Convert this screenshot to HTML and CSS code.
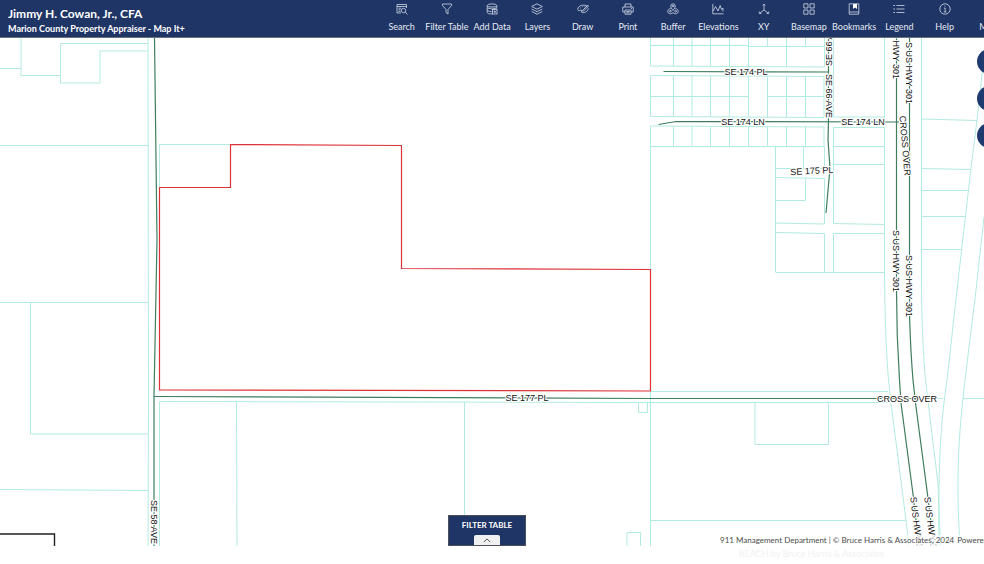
FILE: index.html
```html
<!DOCTYPE html>
<html lang="en">
<head>
<meta charset="utf-8">
<title>Marion County Property Appraiser - Map It+</title>
<link rel="stylesheet" href="styles.css">
</head>
<body>
<header class="header">
  <div class="brand">
    <h1>Jimmy H. Cowan, Jr., CFA</h1>
    <p>Marion County Property Appraiser - Map It+</p>
  </div>
  <nav class="toolbar" aria-label="Map tools">
    <button class="tool"><svg viewBox="0 0 12 12"><path d="M5 10H1V1.500H10.500V5M1 3.500H10.500M2.500 5.200H5M2.500 6.800H4.500M2.500 8.400H4.500"/><circle cx="7.500" cy="7.500" r="2.200"/><path d="M9.100 9.100L11.500 11.500"/></svg><span>Search</span></button>
    <button class="tool"><svg viewBox="0 0 12 12"><path d="M1.500 1H10.500V2.500L7 6.500V11L5 9.500V6.500L1.500 2.500Z"/></svg><span>Filter Table</span></button>
    <button class="tool"><svg viewBox="0 0 12 12"><ellipse cx="6" cy="2.500" rx="4.800" ry="1.600"/><path d="M1.200 2.500V9.500Q1.200 11 6 11M10.800 2.500V5.500M1.200 5Q6 7 10.800 5M1.200 7.500Q3 8.600 5.500 8.600"/><rect x="6.500" y="6.500" width="4.500" height="4.500"/><path d="M7.500 8.800H10M8.750 7.500V10"/></svg><span>Add Data</span></button>
    <button class="tool"><svg viewBox="0 0 12 12"><path d="M6 .8L11.300 3.500L6 6.200L.7 3.500ZM.7 6L6 8.700L11.300 6M.7 8.500L6 11.200L11.300 8.500"/></svg><span>Layers</span></button>
    <button class="tool"><svg viewBox="0 0 12 12"><path d="M10.500 3.200C7.500 1 .8 2.300 .8 6.200C.8 8 2.500 8 3.500 7.200C4.600 6.500 5 8 4.500 9.200C6.500 10.500 11.300 8.800 11.200 5.300M5.200 7.700L10.800 2.300L11.600 3.200L6.200 8.300Z"/><path d="M3 5H3.600M5 3.800H5.600M7.400 3.600H8"/></svg><span>Draw</span></button>
    <button class="tool"><svg viewBox="0 0 12 12"><path d="M3 4V1H9V4M3 9H.8V4H11.200V9H9M3 7H9V11.200H3ZM9 5.500H10M4.300 8.500H7.700M4.300 9.800H7.700"/></svg><span>Print</span></button>
    <button class="tool"><svg viewBox="0 0 12 12"><path d="M6 7.500C4.500 5.500 3.800 4.500 3.800 3A2.200 2.200 0 0 1 8.200 3C8.200 4.500 7.500 5.500 6 7.500Z"/><circle cx="6" cy="3" r=".8"/><path d="M3.500 5.500C-.5 6.500 .2 10.800 3.500 10.800Q4.800 10.800 6 9.700Q7.200 10.800 8.500 10.800C11.800 10.800 12.500 6.500 8.500 5.500"/><circle cx="3.400" cy="8.200" r=".9"/><circle cx="8.600" cy="8.200" r=".9"/></svg><span>Buffer</span></button>
    <button class="tool"><svg viewBox="0 0 12 12"><path d="M.8 1V10.800H11.500M1 8L3.500 3.500L6 8L8.200 2.500L9.500 6.500L11 5V8.500"/></svg><span>Elevations</span></button>
    <button class="tool"><svg viewBox="0 0 12 12"><path d="M6 2V7L2 10M6 7L10 10M4.800 2.500L6 1L7.200 2.500M1.300 8.500V10.500H3.300M10.700 8.500V10.500H8.700"/></svg><span>XY</span></button>
    <button class="tool"><svg viewBox="0 0 12 12"><path d="M.8 .8H5V5H.8ZM7 .8H11.200V5H7ZM.8 7H5V11.200H.8ZM7 7H11.200V11.200H7Z"/></svg><span>Basemap</span></button>
    <button class="tool"><svg viewBox="0 0 12 12"><path d="M1.200 .8H10.800V11.200H1.200ZM1.200 9H10.800"/><path class="solid" d="M5 1H9V6L7 4.500L5 6Z"/></svg><span>Bookmarks</span></button>
    <button class="tool"><svg viewBox="0 0 12 12"><path d="M3.500 2.500H11.500M3.500 6H11.500M3.500 9.500H11.500"/><path class="solid" d="M.6 2H1.700V3H.6ZM.6 5.500H1.700V6.500H.6ZM.6 9H1.700V10H.6Z"/></svg><span>Legend</span></button>
    <button class="tool"><svg viewBox="0 0 12 12"><circle cx="6" cy="6" r="5.200"/><path d="M5 5.200H6.200V9M4.800 9H7.400M5.500 3.200H6.500"/></svg><span>Help</span></button>
    <button class="tool"><svg viewBox="0 0 12 12"><path d="M2 6H3M5.500 6H6.500M9 6H10"/></svg><span>More</span></button>
  </nav>
</header>

<main class="map">
  <svg class="canvas" viewBox="0 38 984 508" role="img" aria-label="Parcel map">
    <g class="parcel">
      <path d="M0 68.500H21M21 38V75.500H60.500M147.500 43.500H60.500V83H100V51H147.500M148 38L148.500 400L148 546"/>
      <path d="M0 145.500H148M0 302.500H148M30.500 302.500V434H148M0 489.500L148 490.500"/>
      <path d="M159.500 188V144.500H230M159.500 546V401.500L650 402.500H890M236.500 401.500L237 546M464.500 402V546"/>
      <path d="M638.500 402.500V412.500H647.500V402.500M627 546V532.500H640.500V546M650.500 520.500H906M755 403V444.500H828.500V403M650.500 391.500H888"/>
      <path d="M650.500 38V66L824 67M650.500 45.500H749M749 46.500H824M673.500 38V66M692 38V66M710.500 38V66M729.500 38V66M748.500 38V66M767.500 38V46M786.500 38V66M805.500 38V46M824.500 38V67"/>
      <path d="M650.500 75.500L824 76.500V117.500L650.500 116.500ZM673.500 75.500V116.500M692 75.500V116.500M710.500 75.500V116.500M729.500 75.500V116.500M748.500 75.500V116.500M767.500 76V117M786.500 76V117M805.500 76V117M650.500 96.500H748.500M767.500 96.500H824"/>
      <path d="M650.500 546V126L824 127V146.500H650.500M673.500 126V146.500M692 126V146.500M710.500 126V146.500M729.500 126V146.500M748.500 126V146.500M767.500 126V146.500M786.500 126V146.500M805.500 126V146.500"/>
      <path d="M775.500 146.500V272M803.500 146.500V168.500M775.500 168.500H824.500V146.500M775.500 177.500L824.500 178.500V224L775.500 223M805.500 178V200.500H775.500M775.500 232.500L824.500 233.500V272M775.500 272.500H884.500"/>
      <path d="M833.500 38V117H884.500M833.500 127.500H884.500M833.500 127.500V223.500L884.500 224.500M833.500 146.500H884.500M833.500 164.500H884.500M833.500 272.500V233.500H884.500"/>
      <path d="M884.500 38V272C885 320 886 350 888.500 380L891 403L906 520L909 546M921.500 38V272C921.500 320 923 350 925.500 380L938 484L940.500 546"/>
      <path d="M984 56L977 120L971 168L957 290L947 380C941 420 938 460 939 546M984 217L976 290L965 380C958 440 956 480 960 546"/>
      <path d="M921.500 119L977 120.500M921.500 168.500L971 169.500M921.500 190.500H968M921.500 216.500H965M921.500 249.500H961M936 398.500H943M963 398.500H984"/>
    </g>
    <g class="road">
      <path d="M154.500 38L157 240L154 396V546"/>
      <path d="M154 396.500L650 398.500H936"/>
      <path d="M663.500 71.500L828.500 72M658.500 124.500L676 121.500L899 122"/>
      <path d="M828.500 38V119L828 140L830 168L826 213"/>
      <path d="M896.500 38V290Q896.500 335 899.500 380L901 403L913.500 498L919 546M909.500 38V315Q910.500 350 913 380L915.500 403L928 498L934 546"/>
    </g>
    <path class="selection" d="M230.500 187.500V144.500L401.500 145.500V268.500L650.500 269.500V391L159.500 390V187.500Z"/>
    <path class="extent" d="M0 534H54.500V546"/>
    <g class="label">
      <text x="746" y="75">SE 174 PL</text>
      <text x="743" y="125">SE 174 LN</text>
      <text x="863" y="125">SE 174 LN</text>
      <text x="527" y="401">SE 177 PL</text>
      <text x="907" y="402">CROSS OVER</text>
      <text transform="translate(812 174) rotate(-3)">SE 175 PL</text>
      <text transform="translate(151 522) rotate(90)">SE 58 AVE</text>
      <text transform="translate(826 96) rotate(90)">SE 66 AVE</text>
      <text transform="translate(832 44) rotate(-90)">SE 66 AVE</text>
      <text transform="translate(893 48) rotate(90)">S US HWY 301</text>
      <text transform="translate(906 73) rotate(90)">S US HWY 301</text>
      <text transform="translate(893 261) rotate(90)">S US HWY 301</text>
      <text transform="translate(906 286) rotate(90)">S US HWY 301</text>
      <text transform="translate(902 146) rotate(85)">CROSS OVER</text>
      <text transform="translate(914 528) rotate(83)">S US HWY 301</text>
      <text transform="translate(928 528) rotate(83)">S US HWY 301</text>
    </g>
  </svg>
  <div class="side-buttons">
    <button aria-label="Zoom in"></button>
    <button aria-label="Zoom out"></button>
    <button aria-label="Home"></button>
  </div>
  <button class="filter-table">
    <span>FILTER TABLE</span>
    <span class="tab"><svg viewBox="0 0 10 6"><path d="M1 5L5 1L9 5"/></svg></span>
  </button>
  <div class="attribution"><span>911 Management Department | © Bruce Harris &amp; Associates, 2024</span><span>Powered by Esri</span></div>
</main>
<footer class="footer">REACH by Bruce Harris &amp; Associates</footer>
</body>
</html>
```
FILE: styles.css
```css
* {
  box-sizing: border-box;
}

body {
  margin: 0;
  overflow: hidden;
  background: #fff;
  font-family: Lato, "Liberation Sans", sans-serif;
}

button {
  margin: 0;
  padding: 0;
  border: 0;
  font: inherit;
  color: inherit;
  background: none;
}

.header {
  display: grid;
  grid-template-columns: minmax(0, 379px) 1fr;
  height: 38px;
  overflow: hidden;
  color: #fff;
  background: #1f3566;
  border-bottom: 1px solid #6d7079;
}

.brand {
  padding: 6px 8px 0;
  white-space: nowrap;
}

.brand h1 {
  margin: 0;
  font-size: 12px;
  line-height: 16px;
}

.brand p {
  margin: 0;
  font-size: 9px;
  font-weight: 700;
  line-height: 14px;
}

.toolbar {
  display: grid;
  grid-auto-flow: column;
  grid-auto-columns: 4.6vw;
  min-width: 0;
}

.tool {
  display: flex;
  flex-direction: column;
  align-items: center;
  gap: 6px;
  padding-top: 3px;
  font-size: 9px;
  line-height: 12px;
  white-space: nowrap;
  color: #e6eaf3;
}

.tool svg {
  width: 12px;
  height: 12px;
  fill: none;
  stroke: #d3daea;
  stroke-width: 0.8;
}

.tool .solid {
  fill: #fff;
  stroke: none;
}

.map {
  position: relative;
  overflow: hidden;
}

.canvas {
  display: block;
  width: 100%;
  height: auto;
  fill: none;
}

.parcel {
  stroke: #b2ebe1;
  stroke-width: 1;
}

.road {
  stroke: #3f7d5f;
  stroke-width: 1.2;
}

.selection {
  stroke: #dd3238;
  stroke-width: 1.2;
  stroke-linejoin: round;
}

.extent {
  stroke: #222;
  stroke-width: 1.4;
}

.label {
  font-family: "Liberation Sans", Arial, sans-serif;
  font-size: 9px;
  text-anchor: middle;
  fill: #111;
  stroke: #fff;
  stroke-width: 2;
  paint-order: stroke;
}

.side-buttons {
  position: absolute;
  top: 11px;
  right: -18px;
  display: grid;
  gap: 12px;
}

.side-buttons button {
  width: 25px;
  height: 25px;
  border-radius: 50%;
  background: #1f3a6e;
}

.filter-table {
  position: absolute;
  bottom: 0;
  left: 50%;
  display: flex;
  flex-direction: column;
  align-items: center;
  justify-content: space-between;
  width: 78px;
  height: 31px;
  margin-left: -44px;
  padding-top: 4px;
  border: 1px solid #4c4f56;
  color: #fff;
  background: #1f3566;
  font-size: 8px;
  font-weight: 700;
  line-height: 10px;
}

.tab {
  display: grid;
  place-items: center;
  width: 26px;
  height: 10px;
  border-radius: 2px 2px 0 0;
  background: #f1f1f1;
}

.tab svg {
  width: 8px;
  height: 5px;
  fill: none;
  stroke: #333;
}

.attribution {
  position: absolute;
  bottom: 0;
  left: calc(100% - 268px);
  display: flex;
  gap: 3px;
  padding-left: 4px;
  font-size: 8px;
  line-height: 11px;
  white-space: nowrap;
  color: #4c4c4c;
  background: rgba(255, 255, 255, 0.7);
}

.footer {
  padding-right: 100px;
  font-size: 9px;
  line-height: 16px;
  text-align: right;
  color: #f1f1f1;
}
```
